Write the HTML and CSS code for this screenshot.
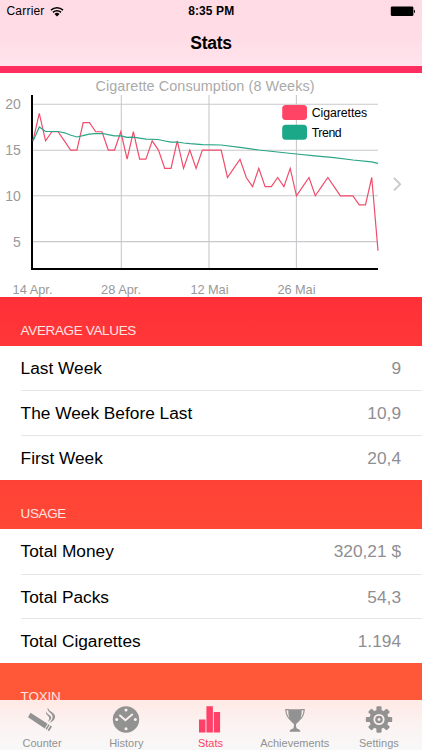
FILE: index.html
```html
<!DOCTYPE html>
<html lang="en">
<head>
    <meta charset="UTF-8">
    <meta name="viewport" content="width=device-width, initial-scale=1.0">
    <title>Stats</title>
    <link rel="stylesheet" href="styles.css">
</head>
<body>
    <div class="app">
        <header class="header">
            <div class="status-bar">
                <div class="carrier">
                    <span>Carrier</span>
                    <svg width="14" height="11" viewBox="0 0 14 11">
                        <g fill="none" stroke="#000" stroke-width="1.5">
                            <path d="M1 4.1a8.6 8.6 0 0 1 12 0"/>
                            <path d="M3 6.4a5.7 5.7 0 0 1 8 0"/>
                        </g>
                        <path d="M7 10.4L4.5 7.9a3.6 3.6 0 0 1 5 0z"/>
                    </svg>
                </div>
                <span class="time">8:35 PM</span>
                <svg class="battery" width="26" height="11" viewBox="0 0 26 11">
                    <rect x="0.8" y="0.5" width="22.6" height="9.6" rx="1.3"/>
                    <path d="M24 3.8c1.4.3 1.4 3.1 0 3.4z"/>
                </svg>
            </div>
            <h1>Stats</h1>
        </header>

        <main class="content">
            <section class="chart">
                <svg width="422" height="224" viewBox="0 73 422 224">
                    <g class="grid">
                        <path d="M33 104.3H378M33 150.2H378M33 195.8H378M33 241.6H378"/>
                        <path d="M121.3 95V268M209 95V268M296.4 95V268"/>
                    </g>
                    <path class="axis" d="M32 95V269H378"/>
                    <polyline class="line cigarettes" id="cigarettes"/>
                    <polyline class="line trend" points="33,141 39.4,127 45.5,131.5 58,131.5 64.5,132.8 71,135.3 77,137 83,135.7 89,134.2 95,133.7 103,133.5 108,134.6 114.5,135.8 121,135.9 127,137.4 133,137.1 139.5,138.2 146,139.2 158,139.5 165,141 171,142.2 177,142 183.6,143 190,143.7 202.5,144.6 221,145 240,147.4 259,150 277.5,152 296.4,154 315,155.8 334,157.6 353,160 371.5,161.8 378,163.4"/>
                    <text class="title" x="95.5" y="91.4" textLength="219">Cigarette Consumption (8 Weeks)</text>
                    <g class="label-y">
                        <text x="20.8" y="109.4">20</text>
                        <text x="20.8" y="155.4">15</text>
                        <text x="20.8" y="201">10</text>
                        <text x="20.8" y="246.8">5</text>
                    </g>
                    <g class="label-x">
                        <text x="12.5" y="294" textLength="40">14 Apr.</text>
                        <text x="101" y="294" textLength="40">28 Apr.</text>
                        <text x="190.5" y="294" textLength="38">12 Mai</text>
                        <text x="277.5" y="294" textLength="38">26 Mai</text>
                    </g>
                    <rect x="282.2" y="105" width="24.8" height="15" rx="3.5" fill="#ff4466"/>
                    <rect x="282.2" y="124.8" width="24.8" height="15" rx="3.5" fill="#1aa888"/>
                    <text class="legend" x="311.7" y="117" textLength="55.5">Cigarettes</text>
                    <text class="legend" x="311.7" y="136.8" textLength="30">Trend</text>
                    <path class="arrow" d="M394 178l6.2 6.2-6.2 6.2"/>
                </svg>
            </section>

            <section class="group">
                <h2 class="average">Average Values</h2>
                <ul>
                    <li><span>Last Week</span><span class="value">9</span></li>
                    <li><span>The Week Before Last</span><span class="value">10,9</span></li>
                    <li><span>First Week</span><span class="value">20,4</span></li>
                </ul>
            </section>

            <section class="group">
                <h2 class="usage">Usage</h2>
                <ul>
                    <li><span>Total Money</span><span class="value">320,21 $</span></li>
                    <li><span>Total Packs</span><span class="value">54,3</span></li>
                    <li><span>Total Cigarettes</span><span class="value">1.194</span></li>
                </ul>
            </section>

            <section class="group">
                <h2 class="toxin">Toxin</h2>
            </section>
        </main>

        <nav class="tab-bar">
            <a class="tab">
                <svg width="30" height="28" viewBox="0 0 30 28">
                    <path d="M3.500 6.800L20.600 17.800 17.800 22.500 1 11.200z"/>
                    <path d="M21.400 18.300l1.300.8-2.900 4.700-1.300-.8zM23.500 19.600l1.500 1-2.900 4.600-1.500-1z"/>
                    <path d="M21 1.500c-2.200 3.800 4.300 5 4.600 9 .2 2.700-1.600 4.800-3.600 6.500 4-1.400 6.300-4 6-6.800-.4-4-7-4.800-7-8.700z"/>
                    <path d="M19.300 5.500c-1.600 3.600 3.600 4.300 3 7.200-.2 1.200-.9 2-1.700 2.800 2-.7 3.600-2 3.600-3.800 0-2.800-4.700-3.200-4.900-6.200z"/>
                </svg>
                <span>Counter</span>
            </a>
            <a class="tab">
                <svg width="28" height="28" viewBox="0 0 28 28">
                    <circle cx="14" cy="13.500" r="13.200"/>
                    <path class="cut-line" d="M8 9.500l5.400 4.700 6.800-5.600"/>
                    <g class="cut">
                        <circle cx="14" cy="4" r="1.500"/>
                        <circle cx="23.300" cy="13.500" r="1.500"/>
                        <circle cx="14" cy="22.700" r="1.500"/>
                        <circle cx="4.700" cy="13.500" r="1.500"/>
                    </g>
                </svg>
                <span>History</span>
            </a>
            <a class="tab active">
                <svg width="24" height="28" viewBox="0 0 24 28">
                    <path d="M1 13.500h6.500v13H1zM8.400.3h6.500v26.200H8.400zM15.800 6h6.300v20.500h-6.300z"/>
                </svg>
                <span>Stats</span>
            </a>
            <a class="tab">
                <svg width="22" height="28" viewBox="0 0 22 28">
                    <path d="M4.300 3.200h13.400c.1 6.600-1 11.600-5.200 14.400-.7.500-.6 3.800.3 4.900 2 .8 3.600 1.300 3.600 3.200H5.600c0-1.900 1.600-2.400 3.600-3.200.9-1.100 1-4.400.3-4.900C5.300 14.800 4.200 9.800 4.300 3.200z"/>
                    <path class="handle" d="M5 3.700H1.800c.2 4.700 1.700 8.300 5.800 10.900M17 3.700h3.200c-.2 4.700-1.700 8.300-5.800 10.900"/>
                </svg>
                <span>Achievements</span>
            </a>
            <a class="tab">
                <svg width="28" height="28" viewBox="-14 -13.500 28 28">
                    <g id="teeth">
                        <rect id="tooth" x="-2.600" y="-13.200" width="5.200" height="7" rx="1.200"/>
                        <use href="#tooth" transform="rotate(45)"/>
                        <use href="#tooth" transform="rotate(90)"/>
                        <use href="#tooth" transform="rotate(135)"/>
                    </g>
                    <use href="#teeth" transform="rotate(180)"/>
                    <circle r="9.700"/>
                    <circle class="ring" r="4.700"/>
                    <circle class="cut" r="1.400"/>
                </svg>
                <span>Settings</span>
            </a>
        </nav>
    </div>

    <script>
        // cigarettes per day, starting on 14 April
        const days = [
            16, 19, 16, 17, 17, 16, 15, 15, 18, 18, 17, 17, 15, 15,
            17, 14, 17, 14, 14, 16, 15, 13, 13, 16, 13, 15, 13, 15,
            15, 15, 15, 12, 13, 14, 12, 11, 13, 11, 11, 12, 11, 13,
            10, 11, 12, 10, 11, 12, 11, 10, 10, 10, 9, 9, 12, 4
        ];
        const points = days.map((n, i) => `${33 + i * 6.273},${287.3 - n * 9.15}`);
        document.getElementById('cigarettes').setAttribute('points', points.join(' '));
    </script>
</body>
</html>
```

FILE: styles.css
```css
body {
    font-family: "Liberation Sans", Arial, sans-serif;
    margin: 0;
    background: #fff;
    color: #000;
}
.app {
    display: flex;
    flex-direction: column;
    height: 750px;
    overflow: hidden;
}
.header {
    box-sizing: border-box;
    height: 72.6px;
    flex: none;
    border-bottom: 7.4px solid #ff2d60;
    background: linear-gradient(#ffdbe6, #ffdce6 50%, #ffe3ec);
}
.status-bar {
    display: grid;
    grid-template-columns: 1fr auto 1fr;
    align-items: center;
    height: 22px;
    padding: 0 6px 0 6.5px;
    font-size: 12px;
}
.carrier {
    display: flex;
    align-items: center;
    gap: 5px;
    letter-spacing: 0.2px;
}
.time {
    font-weight: bold;
    font-size: 12px;
    letter-spacing: 0.1px;
}
.battery {
    justify-self: end;
}
h1 {
    margin: 0;
    font-size: 17.5px;
    line-height: 43px;
    text-align: center;
    letter-spacing: -0.3px;
}
.content {
    flex: 1;
    min-height: 0;
    overflow: hidden;
}
.chart {
    height: 224px;
}
.chart svg {
    display: block;
}
.grid path {
    fill: none;
    stroke: #c9c9cd;
    stroke-width: 1.1;
}
.axis {
    fill: none;
    stroke: #000;
    stroke-width: 2;
}
.line {
    fill: none;
    stroke-width: 1.2;
}
.cigarettes {
    stroke: #f04d6b;
}
.trend {
    stroke: #2aa587;
}
.title {
    font-size: 14.4px;
    fill: #aaa;
}
.label-y {
    font-size: 14px;
    fill: #999;
    text-anchor: end;
}
.label-x {
    font-size: 12.8px;
    fill: #999;
}
.legend {
    font-size: 12.3px;
}
.arrow {
    fill: none;
    stroke: #c7c7cc;
    stroke-width: 1.8;
}
h2 {
    box-sizing: border-box;
    height: 49.2px;
    margin: 0;
    padding: 26px 0 0 20.6px;
    font-size: 13.5px;
    font-weight: normal;
    line-height: 16px;
    text-transform: uppercase;
    color: #ffe4e2;
}
.average {
    background: linear-gradient(#ff3038, #ff3737);
    letter-spacing: -0.35px;
}
.usage {
    background: linear-gradient(#ff4236, #ff4836);
    letter-spacing: -0.4px;
}
.toxin {
    background: #ff5838;
    letter-spacing: -0.2px;
}
ul {
    margin: 0;
    padding: 0 0 0 20.6px;
    list-style: none;
}
li {
    box-sizing: border-box;
    display: flex;
    justify-content: space-between;
    height: 44.7px;
    padding-right: 21px;
    font-size: 17.3px;
    line-height: 45px;
}
li + li {
    border-top: 1px solid #e6e6e8;
    line-height: 44px;
}
.value {
    color: #8e8e93;
}
.tab-bar {
    display: grid;
    grid-template-columns: repeat(5, 1fr);
    height: 50px;
    flex: none;
    padding-right: 1px;
    background: linear-gradient(#ffe9e5, #fbf3f2 50%, #f8f8f8);
}
.tab {
    display: flex;
    flex-direction: column;
    align-items: center;
    padding-top: 5.5px;
    font-size: 11px;
    line-height: 19px;
    color: #929292;
    fill: #929292;
}
.active {
    color: #ff4068;
    fill: #ff4068;
}
.cut {
    fill: #fcf1ef;
}
.cut-line {
    fill: none;
    stroke: #fcf1ef;
    stroke-width: 2;
    stroke-linecap: round;
}
.handle {
    fill: none;
    stroke: #929292;
    stroke-width: 1.2;
}
.ring {
    fill: none;
    stroke: #fcf1ef;
    stroke-width: 1.8;
}
```
